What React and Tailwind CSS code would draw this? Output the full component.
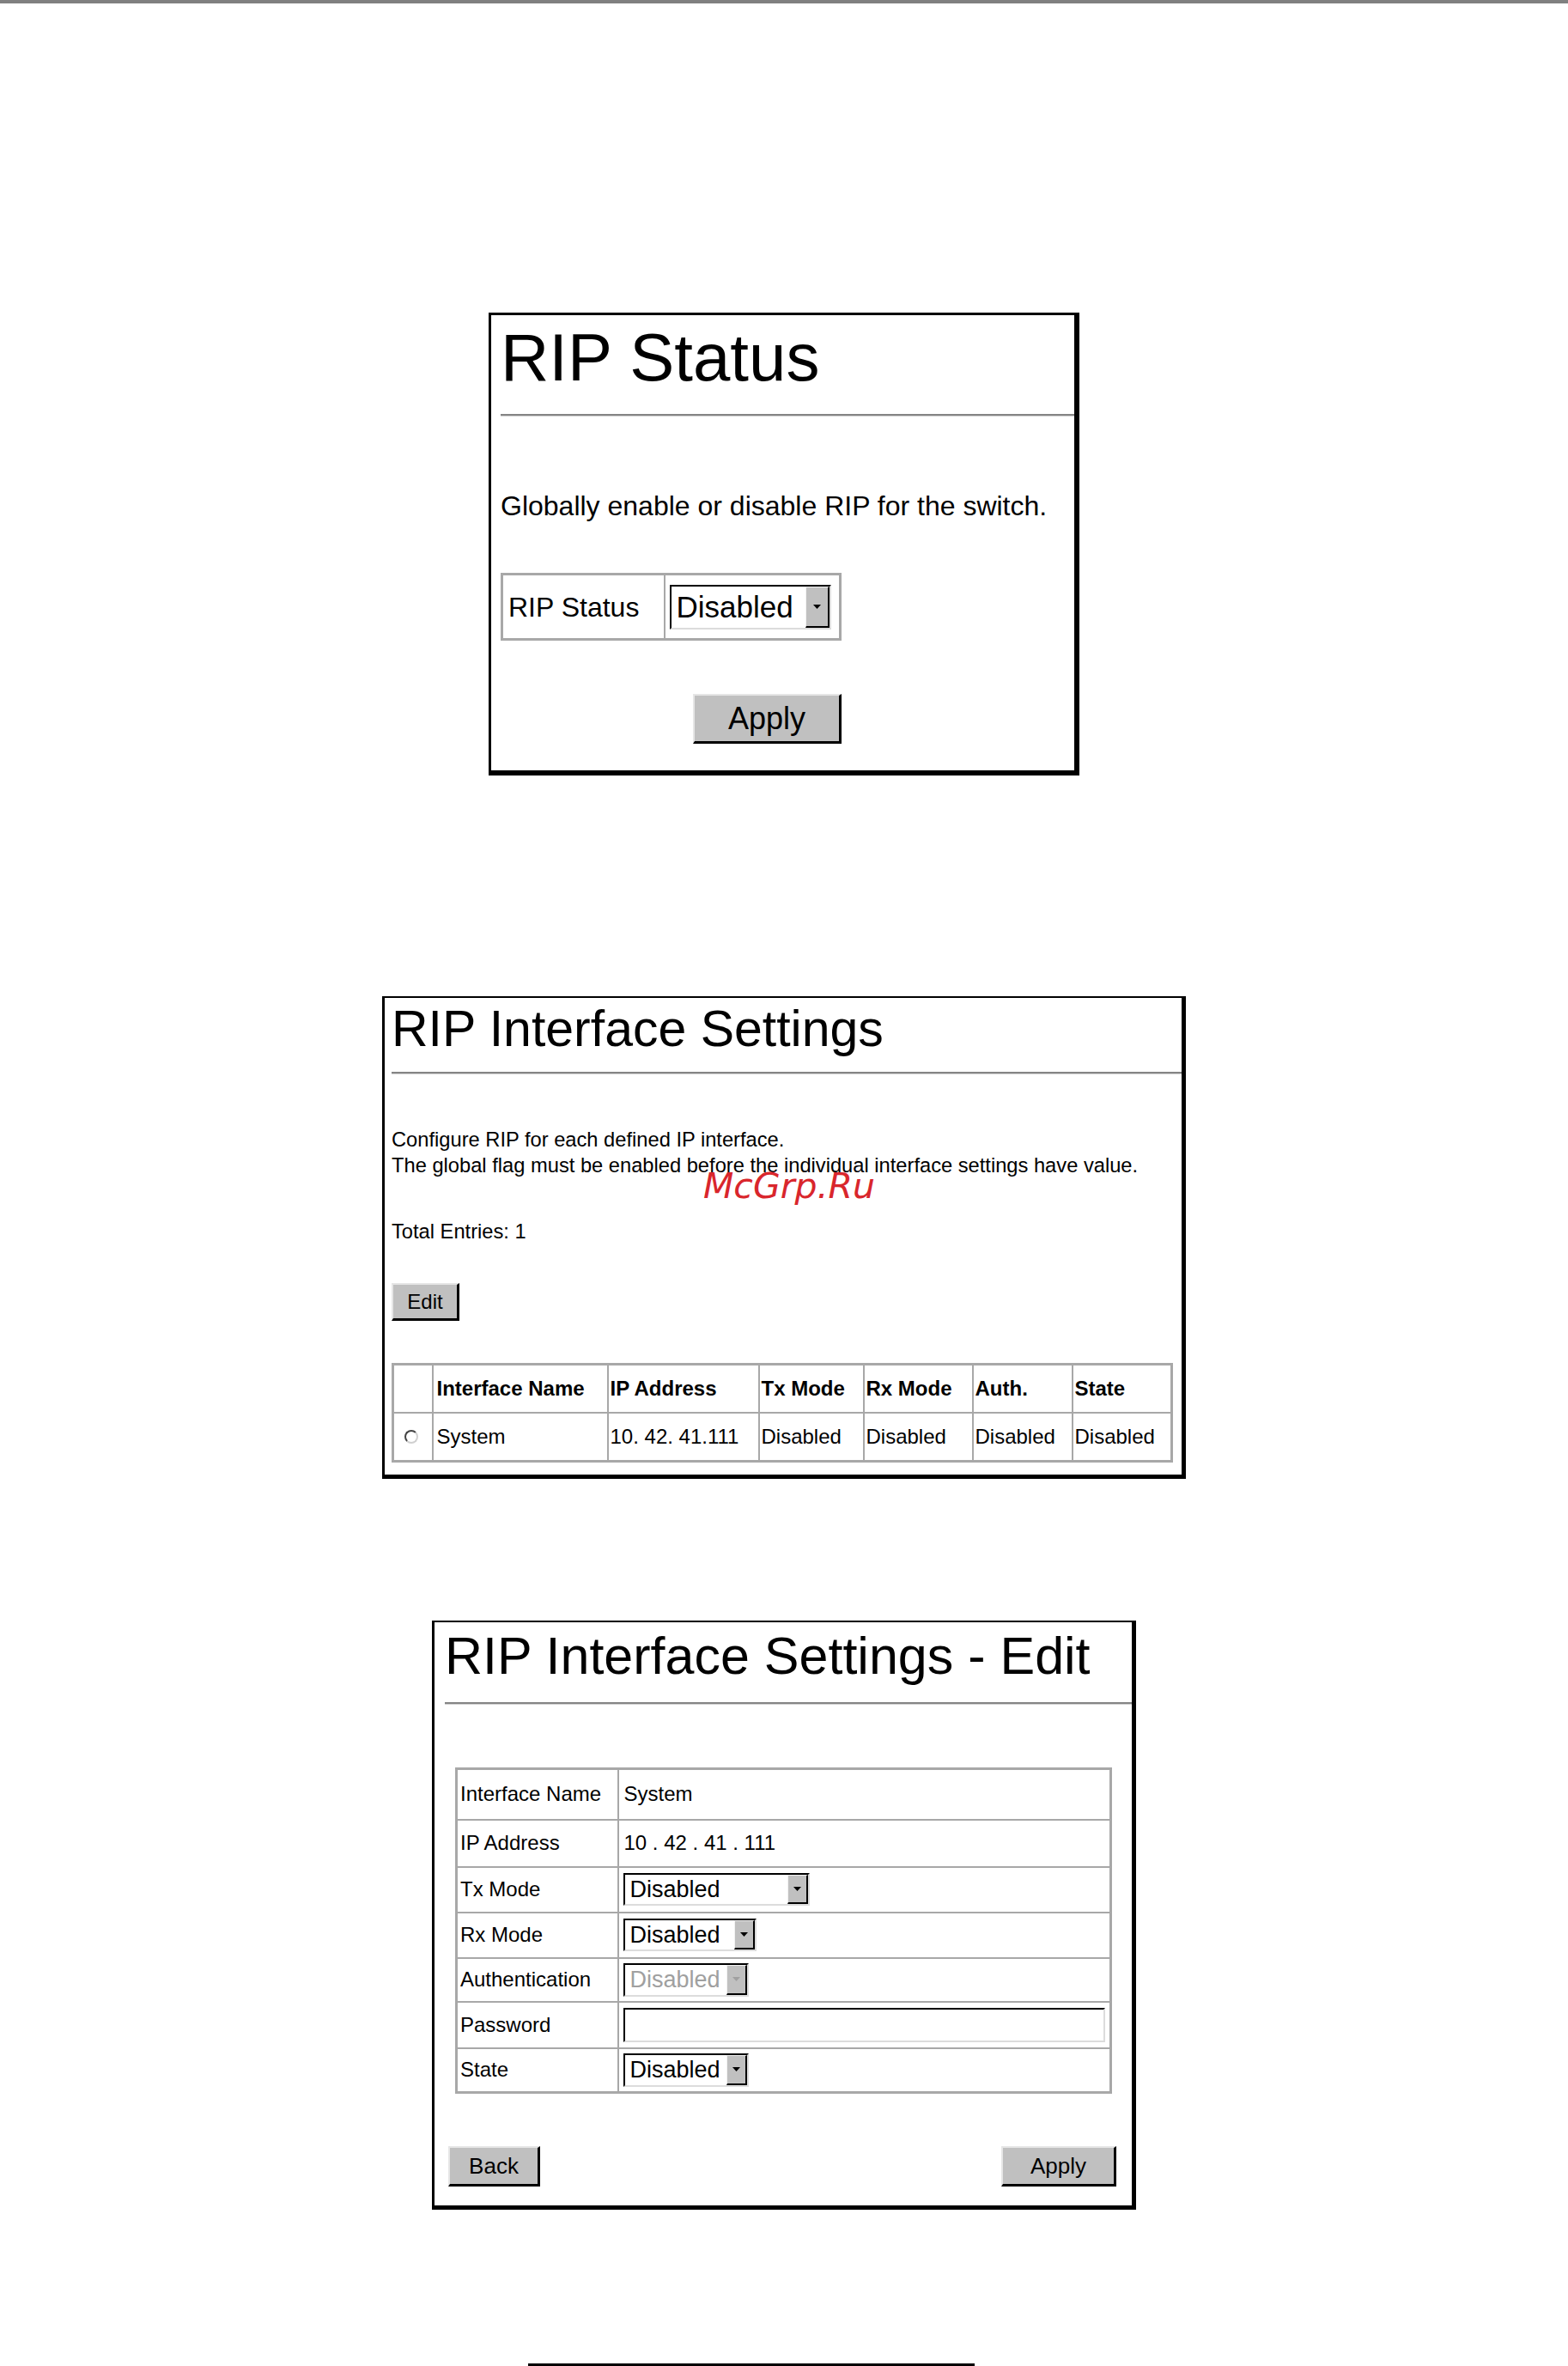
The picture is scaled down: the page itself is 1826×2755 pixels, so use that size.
import React from 'react';

function Select({ className, text, textSize = 'text-[27px]', arrowW = 'w-[24px]', disabled }) {
  return (
    <div
      className={`flex bg-white border-2 border-t-black border-l-black border-b-[#dcdcdc] border-r-[#dcdcdc] ${className}`}
    >
      <span
        className={`flex-1 flex items-center pl-[6px] leading-none ${textSize} ${
          disabled ? 'text-[#a0a0a0]' : 'text-black'
        }`}
      >
        {text}
      </span>
      <span
        className={`flex items-center justify-center bg-[#c0c0c0] border-t border-l border-t-[#f2f2f2] border-l-[#f2f2f2] border-b-2 border-r-2 border-b-black border-r-black ${arrowW}`}
      >
        <svg width="9" height="5" viewBox="0 0 9 5">
          <polygon points="0,0 9,0 4.5,5" fill={disabled ? '#a0a0a0' : '#000'} />
        </svg>
      </span>
    </div>
  );
}

function Btn({ className, children }) {
  return (
    <button
      className={`flex items-center justify-center bg-[#c0c0c0] border-t-2 border-l-2 border-t-[#e6e6e6] border-l-[#e6e6e6] border-b-[3px] border-r-[3px] border-b-black border-r-black leading-none text-black ${className}`}
    >
      {children}
    </button>
  );
}

function Rule() {
  return <div className="border-t-2 border-t-[#858585] border-b border-b-[#d2d2d2]" />;
}

const cell = 'border-2 border-[#a8a8a8] align-middle leading-none';

const editRows = [
  { label: 'Interface Name', h: 'h-[59px]', value: <span className="pl-[1px] text-[24px]">System</span> },
  { label: 'IP Address', h: 'h-[55px]', value: <span className="pl-[1px] text-[24px]">10 . 42 . 41 . 111</span> },
  { label: 'Tx Mode', h: 'h-[53px]', value: <Select className="w-[217px] h-[38px]" text="Disabled" /> },
  { label: 'Rx Mode', h: 'h-[53px]', value: <Select className="w-[155px] h-[38px]" text="Disabled" /> },
  {
    label: 'Authentication',
    h: 'h-[51px]',
    value: <Select className="w-[146px] h-[39px]" text="Disabled" disabled />,
  },
  {
    label: 'Password',
    h: 'h-[54px]',
    value: (
      <div className="w-[561px] h-[40px] bg-white border-2 border-t-black border-l-black border-b-[#dcdcdc] border-r-[#dcdcdc]" />
    ),
  },
  { label: 'State', h: 'h-[52px]', value: <Select className="w-[146px] h-[39px]" text="Disabled" /> },
];

export default function App() {
  return (
    <div className="relative w-[1826px] h-[2755px] bg-white text-black flex flex-col items-center font-['Liberation_Sans',Arial,sans-serif]">
      <div className="self-stretch h-[4px] bg-[#808080] shrink-0" />

      {/* RIP Status */}
      <section className="mt-[360px] w-[688px] h-[539px] shrink-0 border-t-[3px] border-l-[3px] border-r-[6px] border-b-[6px] border-black pl-[11px] pt-[10px]">
        <h1 className="text-[78px] leading-none">RIP Status</h1>
        <div className="mt-[27px]">
          <Rule />
        </div>
        <p className="mt-[88px] text-[32px] leading-none">Globally enable or disable RIP for the switch.</p>
        <div className="mt-[62px] w-[397px]">
          <table className="w-full border-collapse border-[3px] border-[#a8a8a8]">
            <tbody>
              <tr>
                <td className={`${cell} w-[189px] h-[76px] pl-[6px] text-[32px]`}>RIP Status</td>
                <td className={`${cell} px-[5px]`}>
                  <Select className="w-[188px] h-[52px]" text="Disabled" textSize="text-[35px]" arrowW="w-[28px]" />
                </td>
              </tr>
            </tbody>
          </table>
          <div className="mt-[62px] flex justify-end">
            <Btn className="w-[173px] h-[58px] text-[36px]">Apply</Btn>
          </div>
        </div>
      </section>

      {/* RIP Interface Settings */}
      <section className="relative mt-[257px] w-[936px] h-[562px] shrink-0 border-t-2 border-l-[3px] border-r-[5px] border-b-[5px] border-black pl-[8px] pt-[7px]">
        <h1 className="text-[59px] leading-none">RIP Interface Settings</h1>
        <div className="mt-[20px]">
          <Rule />
        </div>
        <div className="mt-[61px] text-[23.7px] leading-[30px]">
          <p>Configure RIP for each defined IP interface.</p>
          <p>The global flag must be enabled before the individual interface settings have value.</p>
        </div>
        <p className="mt-[47px] text-[23.7px] leading-[30px]">Total Entries: 1</p>
        <Btn className="mt-[45px] w-[79px] h-[44px] text-[24px]">Edit</Btn>
        <table className="mt-[49px] w-[907px] table-fixed border-collapse border-[3px] border-[#a8a8a8] text-[24px]">
          <colgroup>
            <col className="w-[46px]" />
            <col className="w-[204px]" />
            <col className="w-[176px]" />
            <col className="w-[122px]" />
            <col className="w-[127px]" />
            <col className="w-[116px]" />
            <col className="w-[116px]" />
          </colgroup>
          <tbody>
            <tr className="font-bold">
              <td className={`${cell} h-[56px]`} />
              <td className={`${cell} pl-[4px]`}>Interface Name</td>
              <td className={`${cell} pl-[2px]`}>IP Address</td>
              <td className={`${cell} pl-[2px]`}>Tx Mode</td>
              <td className={`${cell} pl-[2px]`}>Rx Mode</td>
              <td className={`${cell} pl-[2px]`}>Auth.</td>
              <td className={`${cell} pl-[2px]`}>State</td>
            </tr>
            <tr>
              <td className={`${cell} h-[57px]`}>
                <div className="ml-[12px] w-[16px] h-[16px] rounded-full bg-white border-2 border-t-[#444] border-l-[#444] border-b-[#d0d0d0] border-r-[#d0d0d0]" />
              </td>
              <td className={`${cell} pl-[4px]`}>System</td>
              <td className={`${cell} pl-[2px]`}>10. 42. 41.111</td>
              <td className={`${cell} pl-[2px]`}>Disabled</td>
              <td className={`${cell} pl-[2px]`}>Disabled</td>
              <td className={`${cell} pl-[2px]`}>Disabled</td>
              <td className={`${cell} pl-[2px]`}>Disabled</td>
            </tr>
          </tbody>
        </table>
        <span className="absolute left-[371px] top-[199px] text-[41px] leading-none italic text-[#d9262c] font-['DejaVu_Sans',sans-serif]">
          McGrp.Ru
        </span>
      </section>

      {/* RIP Interface Settings - Edit */}
      <section className="mt-[165px] w-[820px] h-[686px] shrink-0 border-t-2 border-l-[3px] border-r-[5px] border-b-[5px] border-black pl-[12px] pt-[9px]">
        <h1 className="text-[61px] leading-none">RIP Interface Settings - Edit</h1>
        <div className="mt-[23px]">
          <Rule />
        </div>
        <table className="mt-[73px] ml-[12px] w-[762px] table-fixed border-collapse border-[3px] border-[#a8a8a8]">
          <colgroup>
            <col className="w-[188px]" />
            <col className="w-[574px]" />
          </colgroup>
          <tbody>
            {editRows.map((r) => (
              <tr key={r.label}>
                <td className={`${cell} ${r.h} pl-[3px] text-[24px]`}>{r.label}</td>
                <td className={`${cell} pl-[5px]`}>{r.value}</td>
              </tr>
            ))}
          </tbody>
        </table>
        <div className="mt-[61px] ml-[4px] w-[778px] flex justify-between">
          <Btn className="w-[107px] h-[47px] text-[26px]">Back</Btn>
          <Btn className="w-[134px] h-[47px] text-[26px]">Apply</Btn>
        </div>
      </section>

      <div className="mt-[179px] self-start ml-[615px] w-[520px] h-[3px] bg-black shrink-0" />
    </div>
  );
}
